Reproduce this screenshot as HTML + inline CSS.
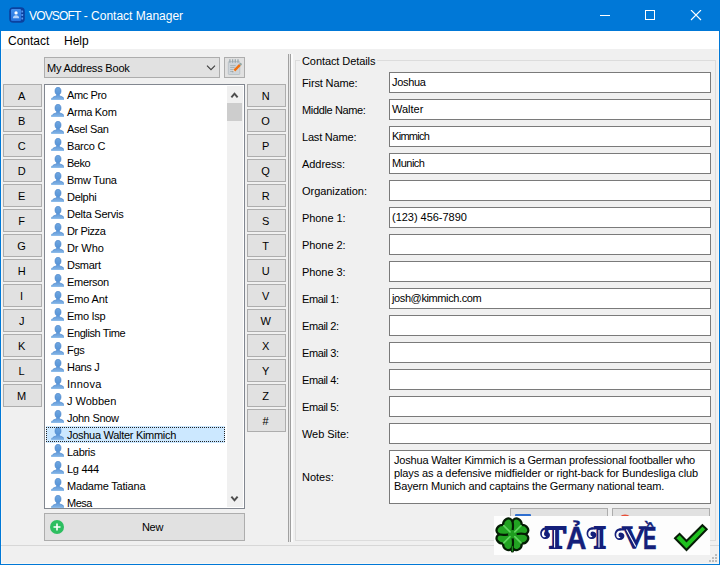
<!DOCTYPE html>
<html><head><meta charset="utf-8"><title>VOVSOFT - Contact Manager</title>
<style>
html,body{margin:0;padding:0}
body{width:720px;height:565px;overflow:hidden;background:#f0f0f0;position:relative;font-family:"Liberation Sans",sans-serif;font-size:11px;color:#000;letter-spacing:-0.3px}
.abs{position:absolute}
.abs span{transform-origin:0 50%}
#frame{position:absolute;left:0;top:0;width:718px;height:564px;border-left:1px solid #0078d7;border-right:1px solid #0078d7;border-bottom:1px solid #0078d7}
#title{position:absolute;left:0;top:0;width:720px;height:31px;background:#0078d7}
#title .cap{position:absolute;left:29px;top:9px;font-size:12px;color:#fff;letter-spacing:-0.28px;white-space:nowrap;line-height:15px}
#menu{position:absolute;left:1px;top:31px;width:718px;height:18px;background:#fff}
#menu span{position:absolute;top:3px;font-size:12px;letter-spacing:0;line-height:15px}
.btn{position:absolute;box-sizing:border-box;background:#e1e1e1;border:1px solid #adadad;text-align:center}
.lb{width:39px;height:23px;line-height:22px;padding-right:2px}
#list{position:absolute;left:44px;top:84px;width:201px;height:425px;box-sizing:border-box;border:1px solid #828790;background:#fff;overflow:hidden}
.it{position:absolute;left:1px;width:179px;height:17px;line-height:18px;white-space:nowrap}
.it svg{position:absolute;left:5px;top:1px}
.it>span{position:absolute;left:21px;top:0}
.sel{background:#cce8ff}
.sel:after{content:"";position:absolute;left:0;top:1px;right:0;bottom:1px;border:1px dotted #222}
.lab{position:absolute;left:302px;white-space:nowrap;line-height:13px}
.inp{position:absolute;left:389px;width:322px;height:21px;box-sizing:border-box;border:1px solid #7a7a7a;background:#fff;line-height:19px;padding-left:2px;white-space:nowrap}
</style></head><body>
<svg width="0" height="0" style="position:absolute"><defs>
<linearGradient id="pg" x1="0" y1="0" x2="0" y2="1"><stop offset="0" stop-color="#6ea6e0"/><stop offset=".55" stop-color="#5a96d8"/><stop offset="1" stop-color="#8abaeb"/></linearGradient>
<symbol id="person" viewBox="0 0 13 13"><path d="M7 0.300c1.900 0 3 1.600 3 3.700 0 1.600-.7 2.900-1.600 3.600v1.200c1.700.5 3.300 1 4 2 .3.400.4 1.300.4 2.200h-11.600c0-.9.1-1.800.4-2.200.7-1 2.300-1.500 4-2v-1.200c-.9-.7-1.600-2-1.600-3.600 0-2.100 1.100-3.700 3-3.700z" fill="url(#pg)" stroke="#4580c8" stroke-width=".6"/><rect x="0" y="11.200" width="13" height="1.800" fill="#8ebcea" opacity=".9"/><rect x="0" y="10.900" width="13" height=".5" fill="#4d88cc" opacity=".55"/></symbol>
</defs></svg>
<div id="title">
<svg class="abs" style="left:9px;top:7px" width="16" height="16" viewBox="0 0 16 16"><defs><linearGradient id="ig" x1="0" y1="0" x2="0" y2="1"><stop offset="0" stop-color="#3f8eee"/><stop offset="1" stop-color="#2271dc"/></linearGradient></defs><rect x="0.200" y="0.200" width="15.600" height="15.600" rx="4" fill="#0b419f"/><rect x="2" y="2" width="10.100" height="12" rx="1.200" fill="url(#ig)"/><rect x="12.400" y="3.600" width="1.700" height="2" rx=".4" fill="#5a9af0"/><rect x="12.400" y="7" width="1.700" height="2" rx=".4" fill="#5a9af0"/><rect x="12.400" y="10.400" width="1.700" height="2" rx=".4" fill="#5a9af0"/><circle cx="7.050" cy="5.900" r="1.650" fill="#fff"/><path d="M3.900 11.300c0-2.200 1.400-3.100 3.150-3.100s3.150.9 3.150 3.100z" fill="#b3d2fa"/></svg>
<div class="cap"><span style="letter-spacing:-0.85px">VOVSOFT</span><span style="letter-spacing:0"> - Contact Manager</span></div>
<svg class="abs" style="left:600px;top:10px" width="110" height="11" viewBox="0 0 110 11"><path d="M0 5.500h10" stroke="#fff" stroke-width="1"/><rect x="45.500" y="0.500" width="9" height="9" fill="none" stroke="#fff" stroke-width="1"/><path d="M91 0l10 10M101 0l-10 10" stroke="#fff" stroke-width="1.100"/></svg>
</div>
<div id="menu"><span style="left:7px">Contact</span> <span style="left:63px">Help</span></div>
<div id="frame"></div>

<div class="btn" style="left:44px;top:57px;width:176px;height:21px;text-align:left;line-height:20px;padding-left:2px;letter-spacing:-0.2px">My Address Book<svg class="abs" style="left:161px;top:7px" width="10" height="6" viewBox="0 0 10 6"><path d="M1 0.700l4 4 4-4" fill="none" stroke="#3c3c3c" stroke-width="1.100"/></svg></div>
<div class="btn" style="left:224px;top:57px;width:21px;height:21px"><svg class="abs" style="left:2px;top:1px" width="16" height="17" viewBox="0 0 16 17"><rect x="1.300" y="2.500" width="11.500" height="13" rx=".8" fill="#cfd5da" stroke="#aab3b9" stroke-width=".6"/><path d="M2.900 0.300v3.400M5.600 0.300v3.400M8.300 0.300v3.400M11 0.300v3.400" stroke="#9aa7ad" stroke-width="1.300"/><path d="M3.200 6.600h5.500M3.200 8.500h4.500M3.200 10.500h3M3.200 12.500h2.500" stroke="#a3b0b4" stroke-width=".9"/><g transform="translate(0.300 0.300) scale(0.920)"><path d="M6.600 11.300l6.200-6.200 1.900 1.900-6.200 6.200z" fill="#f0700f"/><path d="M12.800 5.100l.9-.9c.4-.4 1-.4 1.400 0l.5.500c.4.400.4 1 0 1.400l-.9.900z" fill="#93a7a4"/><path d="M6.600 11.300l1.900 1.900-2.900 1z" fill="#e8e0d0"/><path d="M5.600 14.200l1.300-.4-.9-.9z" fill="#2a3440"/></g></svg></div>
<div class="btn lb" style="left:3px;top:84px">A</div>
<div class="btn lb" style="left:3px;top:109px">B</div>
<div class="btn lb" style="left:3px;top:134px">C</div>
<div class="btn lb" style="left:3px;top:159px">D</div>
<div class="btn lb" style="left:3px;top:184px">E</div>
<div class="btn lb" style="left:3px;top:209px">F</div>
<div class="btn lb" style="left:3px;top:234px">G</div>
<div class="btn lb" style="left:3px;top:259px">H</div>
<div class="btn lb" style="left:3px;top:284px">I</div>
<div class="btn lb" style="left:3px;top:309px">J</div>
<div class="btn lb" style="left:3px;top:334px">K</div>
<div class="btn lb" style="left:3px;top:359px">L</div>
<div class="btn lb" style="left:3px;top:384px">M</div>
<div class="btn lb" style="left:247px;top:84px">N</div>
<div class="btn lb" style="left:247px;top:109px">O</div>
<div class="btn lb" style="left:247px;top:134px">P</div>
<div class="btn lb" style="left:247px;top:159px">Q</div>
<div class="btn lb" style="left:247px;top:184px">R</div>
<div class="btn lb" style="left:247px;top:209px">S</div>
<div class="btn lb" style="left:247px;top:234px">T</div>
<div class="btn lb" style="left:247px;top:259px">U</div>
<div class="btn lb" style="left:247px;top:284px">V</div>
<div class="btn lb" style="left:247px;top:309px">W</div>
<div class="btn lb" style="left:247px;top:334px">X</div>
<div class="btn lb" style="left:247px;top:359px">Y</div>
<div class="btn lb" style="left:247px;top:384px">Z</div>
<div class="btn lb" style="left:247px;top:409px">#</div>
<div id="list">
<div class="it" style="top:1px"><svg width="13" height="13"><use href="#person"/></svg><span><span style="letter-spacing:-0.4px">Amc Pro</span></span></div>
<div class="it" style="top:18px"><svg width="13" height="13"><use href="#person"/></svg><span>Arma Kom</span></div>
<div class="it" style="top:35px"><svg width="13" height="13"><use href="#person"/></svg><span>Asel San</span></div>
<div class="it" style="top:52px"><svg width="13" height="13"><use href="#person"/></svg><span><span style="letter-spacing:-0.2px">Barco C</span></span></div>
<div class="it" style="top:69px"><svg width="13" height="13"><use href="#person"/></svg><span><span style="letter-spacing:-0.5px">Beko</span></span></div>
<div class="it" style="top:86px"><svg width="13" height="13"><use href="#person"/></svg><span>Bmw Tuna</span></div>
<div class="it" style="top:103px"><svg width="13" height="13"><use href="#person"/></svg><span>Delphi</span></div>
<div class="it" style="top:120px"><svg width="13" height="13"><use href="#person"/></svg><span><span style="letter-spacing:-0.23px">Delta Servis</span></span></div>
<div class="it" style="top:137px"><svg width="13" height="13"><use href="#person"/></svg><span><span style="letter-spacing:-0.4px">Dr Pizza</span></span></div>
<div class="it" style="top:154px"><svg width="13" height="13"><use href="#person"/></svg><span><span style="letter-spacing:-0.1px">Dr Who</span></span></div>
<div class="it" style="top:171px"><svg width="13" height="13"><use href="#person"/></svg><span>Dsmart</span></div>
<div class="it" style="top:188px"><svg width="13" height="13"><use href="#person"/></svg><span>Emerson</span></div>
<div class="it" style="top:205px"><svg width="13" height="13"><use href="#person"/></svg><span><span style="letter-spacing:-0.12px">Emo Ant</span></span></div>
<div class="it" style="top:222px"><svg width="13" height="13"><use href="#person"/></svg><span>Emo Isp</span></div>
<div class="it" style="top:239px"><svg width="13" height="13"><use href="#person"/></svg><span><span style="letter-spacing:-0.4px">English Time</span></span></div>
<div class="it" style="top:256px"><svg width="13" height="13"><use href="#person"/></svg><span>Fgs</span></div>
<div class="it" style="top:273px"><svg width="13" height="13"><use href="#person"/></svg><span>Hans J</span></div>
<div class="it" style="top:290px"><svg width="13" height="13"><use href="#person"/></svg><span><span style="letter-spacing:0.26px">Innova</span></span></div>
<div class="it" style="top:307px"><svg width="13" height="13"><use href="#person"/></svg><span><span style="letter-spacing:-0.01px">J Wobben</span></span></div>
<div class="it" style="top:324px"><svg width="13" height="13"><use href="#person"/></svg><span>John Snow</span></div>
<div class="it sel" style="top:341px"><svg width="13" height="13"><use href="#person"/></svg><span><span style="letter-spacing:-0.29px">Joshua Walter Kimmich</span></span></div>
<div class="it" style="top:358px"><svg width="13" height="13"><use href="#person"/></svg><span>Labris</span></div>
<div class="it" style="top:375px"><svg width="13" height="13"><use href="#person"/></svg><span>Lg 444</span></div>
<div class="it" style="top:392px"><svg width="13" height="13"><use href="#person"/></svg><span><span style="letter-spacing:-0.2px">Madame Tatiana</span></span></div>
<div class="it" style="top:409px"><svg width="13" height="13"><use href="#person"/></svg><span><span style="letter-spacing:-0.5px">Mesa</span></span></div>
<div class="abs" style="left:182px;top:1px;width:16px;height:421px;background:#f0f0f0"></div>
<div class="abs" style="left:182px;top:18px;width:15px;height:18px;background:#cdcdcd"></div>
<svg class="abs" style="left:185px;top:6px" width="9" height="8" viewBox="0 0 9 8"><path d="M1.400 6.300l3.100-3.600 3.100 3.600" fill="none" stroke="#4d4d4d" stroke-width="2"/></svg>
<svg class="abs" style="left:185px;top:410px" width="9" height="8" viewBox="0 0 9 8"><path d="M1.400 1.700l3.100 3.600 3.100-3.600" fill="none" stroke="#4d4d4d" stroke-width="2"/></svg>
</div>
<div class="btn" style="left:44px;top:513px;width:201px;height:28px;line-height:27px;padding-left:16px">New<svg class="abs" style="left:5px;top:6px" width="14" height="14" viewBox="0 0 14 14"><circle cx="7" cy="7" r="7" fill="#2dbe60"/><path d="M7 3.500v7M3.500 7h7" stroke="#fff" stroke-width="1.600"/></svg></div>
<div class="abs" style="left:288px;top:54px;width:1px;height:488px;background:#a0a0a0"></div>
<div class="abs" style="left:289px;top:54px;width:1px;height:488px;background:#e6e6e6"></div>
<div class="abs" style="left:290px;top:54px;width:1px;height:488px;background:#a0a0a0"></div>
<div class="abs" style="left:291px;top:54px;width:2px;height:488px;background:#fbfbfb"></div>
<div class="abs" style="left:295px;top:60px;width:421px;height:481px;box-sizing:border-box;border:1px solid #dcdcdc"></div>
<div class="abs" style="left:300px;top:55px;background:#f0f0f0;padding:0 2px;line-height:13px;white-space:nowrap"><span style="letter-spacing:-0.08px">Contact Details</span></div>
<div class="lab" style="top:77px"><span style="letter-spacing:-0.14px">First Name:</span></div><div class="inp" style="top:72px"><span style="letter-spacing:-0.3px">Joshua</span></div>
<div class="lab" style="top:104px"><span style="letter-spacing:-0.36px">Middle Name:</span></div><div class="inp" style="top:99px"><span style="letter-spacing:0px">Walter</span></div>
<div class="lab" style="top:131px"><span style="letter-spacing:-0.2px">Last Name:</span></div><div class="inp" style="top:126px"><span style="letter-spacing:-0.7px">Kimmich</span></div>
<div class="lab" style="top:158px"><span style="letter-spacing:-0.06px">Address:</span></div><div class="inp" style="top:153px"><span style="letter-spacing:-0.5px">Munich</span></div>
<div class="lab" style="top:185px"><span style="letter-spacing:-0.04px">Organization:</span></div><div class="inp" style="top:180px"></div>
<div class="lab" style="top:212px"><span style="letter-spacing:-0.07px">Phone 1:</span></div><div class="inp" style="top:207px"><span style="letter-spacing:-0.03px">(123) 456-7890</span></div>
<div class="lab" style="top:239px"><span style="letter-spacing:-0.07px">Phone 2:</span></div><div class="inp" style="top:234px"></div>
<div class="lab" style="top:266px"><span style="letter-spacing:-0.07px">Phone 3:</span></div><div class="inp" style="top:261px"></div>
<div class="lab" style="top:293px"><span style="letter-spacing:-0.4px">Email 1:</span></div><div class="inp" style="top:288px"><span style="letter-spacing:-0.39px">josh@kimmich.com</span></div>
<div class="lab" style="top:320px"><span style="letter-spacing:-0.4px">Email 2:</span></div><div class="inp" style="top:315px"></div>
<div class="lab" style="top:347px"><span style="letter-spacing:-0.4px">Email 3:</span></div><div class="inp" style="top:342px"></div>
<div class="lab" style="top:374px"><span style="letter-spacing:-0.4px">Email 4:</span></div><div class="inp" style="top:369px"></div>
<div class="lab" style="top:401px"><span style="letter-spacing:-0.4px">Email 5:</span></div><div class="inp" style="top:396px"></div>
<div class="lab" style="top:428px"><span style="letter-spacing:-0.06px">Web Site:</span></div><div class="inp" style="top:423px"></div>
<div class="lab" style="top:471px"><span style="letter-spacing:0px">Notes:</span></div>
<div class="inp" style="top:450px;height:54px;white-space:nowrap;line-height:13px;padding:3px 0 0 4px"><span style="letter-spacing:-0.18px">Joshua Walter Kimmich is a German professional footballer who</span> <br><span style="letter-spacing:-0.11px">plays as a defensive midfielder or right-back for Bundesliga club</span> <br><span style="letter-spacing:-0.14px">Bayern Munich and captains the Germany national team.</span></div>
<div class="btn" style="left:510px;top:508px;width:98px;height:28px"><svg class="abs" style="left:4px;top:5px" width="16" height="16" viewBox="0 0 16 16"><rect x="0" y="0" width="16" height="16" rx="1" fill="#2f6fd0"/><rect x="3" y="2" width="10" height="6" fill="#fff"/></svg></div>
<div class="btn" style="left:612px;top:508px;width:98px;height:28px"><svg class="abs" style="left:4px;top:5px" width="16" height="16" viewBox="0 0 16 16"><circle cx="8" cy="8" r="7.500" fill="#e8503a"/></svg></div>
<div class="abs" style="left:1px;top:49px;width:1px;height:515px;background:#f8f7f4"></div><div class="abs" style="left:718px;top:49px;width:1px;height:515px;background:#f8f7f4"></div><div class="abs" style="left:1px;top:563px;width:718px;height:1px;background:#f8f7f4"></div>
<div class="abs" style="left:1px;top:545px;width:718px;height:1px;background:#d7d7d7"></div>
<svg class="abs" style="left:709px;top:554px" width="8" height="8" viewBox="0 0 8 8" fill="#bcbcbc"><rect x="6" y="0" width="2" height="2"/><rect x="3" y="3" width="2" height="2"/><rect x="6" y="3" width="2" height="2"/><rect x="0" y="6" width="2" height="2"/><rect x="3" y="6" width="2" height="2"/><rect x="6" y="6" width="2" height="2"/></svg>
<svg class="abs" style="left:494px;top:516px" width="216" height="39" viewBox="494 516 216 39"><defs><radialGradient id="cg" cx="512.300" cy="534.300" r="17" gradientUnits="userSpaceOnUse"><stop offset="0" stop-color="#1c961c"/><stop offset="1" stop-color="#2bb02b"/></radialGradient></defs><rect x="494" y="516" width="216" height="39" fill="#fdfdfd"/><g transform="translate(512.400 534.300) scale(0.960)"><path d="M0 8v9.300" stroke="#062606" stroke-width="3.400" stroke-linecap="round"/><path transform="rotate(45)" d="M0 0C-3 -3.500 -10 -6.500 -10 -11.500C-10 -16 -3.800 -17.800 0 -13.800C3.800 -17.800 10 -16 10 -11.500C10 -6.500 3 -3.500 0 0Z" fill="#22a322" stroke="#041c04" stroke-width="2.300" stroke-linejoin="round"/><path transform="rotate(135)" d="M0 0C-3 -3.500 -10 -6.500 -10 -11.500C-10 -16 -3.800 -17.800 0 -13.800C3.800 -17.800 10 -16 10 -11.500C10 -6.500 3 -3.500 0 0Z" fill="#22a322" stroke="#041c04" stroke-width="2.300" stroke-linejoin="round"/><path transform="rotate(225)" d="M0 0C-3 -3.500 -10 -6.500 -10 -11.500C-10 -16 -3.800 -17.800 0 -13.800C3.800 -17.800 10 -16 10 -11.500C10 -6.500 3 -3.500 0 0Z" fill="#22a322" stroke="#041c04" stroke-width="2.300" stroke-linejoin="round"/><path transform="rotate(315)" d="M0 0C-3 -3.500 -10 -6.500 -10 -11.500C-10 -16 -3.800 -17.800 0 -13.800C3.800 -17.800 10 -16 10 -11.500C10 -6.500 3 -3.500 0 0Z" fill="#22a322" stroke="#041c04" stroke-width="2.300" stroke-linejoin="round"/><path d="M0 13v4.300" stroke="#1c8c1c" stroke-width="1.400" stroke-linecap="round"/><circle r="4.500" fill="#1f9d1f"/><path d="M-2.500 -2.500L-9 -9M2.500 -2.500L9 -9M-2.500 2.500L-9 9M2.500 2.500L9 9" stroke="#5fd45f" stroke-width="1.700" stroke-linecap="round"/></g><g fill="#141f7a"><path transform="translate(540.200 527.300)" d="M6 0C2.500 0 0 2.800 0 6.200C0 9.600 2.600 11.800 5.400 11.800C8 11.800 9.800 10 9.800 7.800C9.800 5.800 8.400 4.600 6.800 4.600C5.400 4.600 4.400 5.600 4.400 6.800C4.400 7.800 5.100 8.400 5.900 8.400C5.600 9.400 4.900 9.900 4 9.900C2.600 9.900 1.600 8.500 1.600 6.400C1.600 3.800 3.400 2.200 6 2.200Z"/><circle cx="546.300" cy="533.900" r="2.300"/><rect x="545" y="527.300" width="3" height="2.200"/><path transform="translate(586.600 527.300)" d="M6 0C2.500 0 0 2.800 0 6.200C0 9.600 2.600 11.800 5.400 11.800C8 11.800 9.800 10 9.800 7.800C9.800 5.800 8.400 4.600 6.800 4.600C5.400 4.600 4.400 5.600 4.400 6.800C4.400 7.800 5.100 8.400 5.900 8.400C5.600 9.400 4.900 9.900 4 9.900C2.600 9.900 1.600 8.500 1.600 6.400C1.600 3.800 3.400 2.200 6 2.200Z"/><circle cx="592.700" cy="533.900" r="2.300"/><rect x="591.500" y="527.300" width="4" height="2.200"/><path transform="translate(614.600 528.300)" d="M6 0C2.500 0 0 2.800 0 6.200C0 9.600 2.600 11.800 5.400 11.800C8 11.800 9.800 10 9.800 7.800C9.800 5.800 8.400 4.600 6.800 4.600C5.400 4.600 4.400 5.600 4.400 6.800C4.400 7.800 5.100 8.400 5.900 8.400C5.600 9.400 4.900 9.900 4 9.900C2.600 9.900 1.600 8.500 1.600 6.400C1.600 3.800 3.400 2.200 6 2.200Z"/><circle cx="620.700" cy="534.900" r="2.300"/><rect x="619.500" y="528.300" width="5" height="2.200"/></g><path d="M675 538.300L679.600 533.800L686.500 541L702.400 525.200L706.700 529.200L686.500 550Z" fill="#1fc01f" stroke="#061c06" stroke-width="2" stroke-linejoin="miter"/></svg>
<div class="abs" style="left:0;top:0;width:720px;height:0;color:#141f7a;font-weight:bold;letter-spacing:0;line-height:1;white-space:nowrap"><span style="position:absolute;left:545.3px;top:521.64px;font-family:'Liberation Serif',serif;font-size:31px;-webkit-text-stroke:2px #141f7a;">T</span><span style="position:absolute;left:565.9px;top:522.68px;font-family:'Liberation Sans',sans-serif;font-size:30.500px;-webkit-text-stroke:0.4px #141f7a;transform:scaleX(0.93);">Ả</span><span style="position:absolute;left:593.8px;top:521.64px;font-family:'Liberation Serif',serif;font-size:31px;-webkit-text-stroke:2px #141f7a;">I</span> <span style="position:absolute;left:621.8px;top:521.64px;font-family:'Liberation Serif',serif;font-size:31px;-webkit-text-stroke:1.4px #141f7a;transform:scaleX(1.08);">V</span><span style="position:absolute;left:643.4px;top:522.68px;font-family:'Liberation Sans',sans-serif;font-size:30.500px;-webkit-text-stroke:0.5px #141f7a;transform:scaleX(0.66);">Ề</span></div>
<svg class="abs" style="left:494px;top:516px" width="216" height="39" viewBox="494 516 216 39"><path d="M554.600 530v17.500M599 530v17.500" stroke="#fdfdfd" stroke-width="1.100"/><path d="M626.500 529.500l9.200 17" stroke="#fdfdfd" stroke-width="1.100"/></svg>
</body></html>
